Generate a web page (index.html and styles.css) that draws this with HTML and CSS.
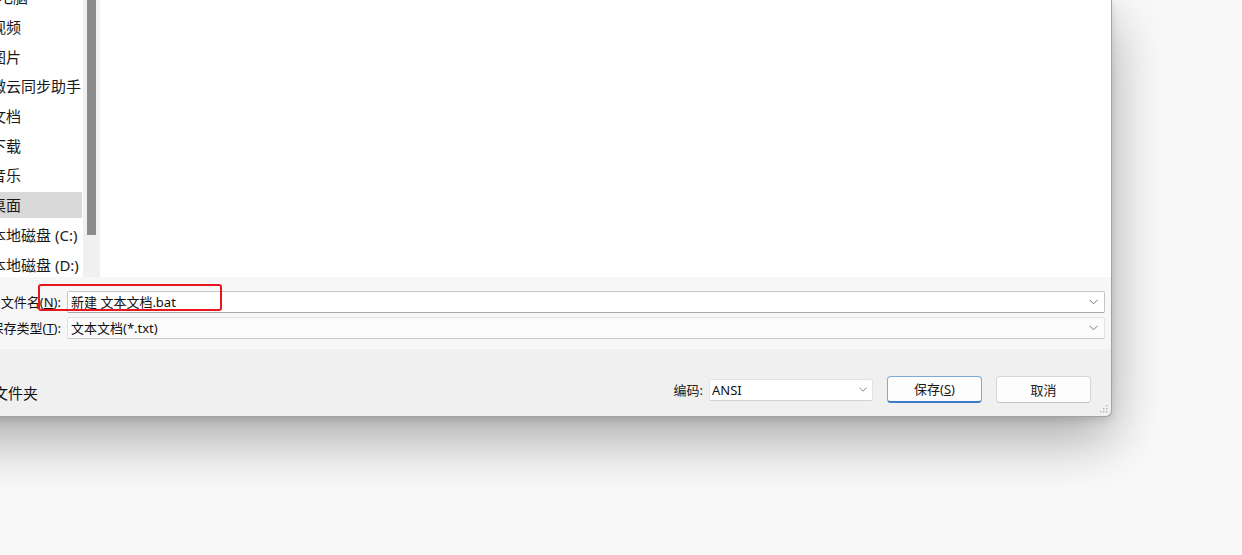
FILE: index.html
```html
<!DOCTYPE html>
<html lang="zh-CN">
<head>
<meta charset="utf-8">
<title>另存为</title>
<link rel="stylesheet" href="styles.css">
</head>
<body>
<div class="desktop">
  <div class="window">
    <div class="panes">
      <div class="nav">
        <ul class="nav-list">
          <li class="nav-item nav-root">此电脑</li>
          <li class="nav-item">视频</li>
          <li class="nav-item">图片</li>
          <li class="nav-item">微云同步助手</li>
          <li class="nav-item">文档</li>
          <li class="nav-item">下载</li>
          <li class="nav-item">音乐</li>
          <li class="nav-item selected">桌面</li>
          <li class="nav-item">本地磁盘 (C:)</li>
          <li class="nav-item">本地磁盘 (D:)</li>
        </ul>
      </div>
      <div class="scrollbar"><div class="thumb"></div></div>
      <div class="main"></div>
    </div>

    <div class="form">
      <div class="form-row">
        <label class="form-label">文件名(<u>N</u>):</label>
        <div class="field field-input">
          <span class="field-text">新建 文本文档.bat</span>
          <svg class="chev" width="9" height="6" viewBox="0 0 9 6"><polyline points="0.5,0.8 4.5,4.8 8.5,0.8" fill="none" stroke="#7a7a7a" stroke-width="1"/></svg>
        </div>
        <div class="highlight"></div>
      </div>
      <div class="form-row">
        <label class="form-label">保存类型(<u>T</u>):</label>
        <div class="field field-combo">
          <span class="field-text">文本文档(*.txt)</span>
          <svg class="chev" width="9" height="6" viewBox="0 0 9 6"><polyline points="0.5,0.8 4.5,4.8 8.5,0.8" fill="none" stroke="#7a7a7a" stroke-width="1"/></svg>
        </div>
      </div>
    </div>

    <div class="footer">
      <div class="hide-folders">隐藏文件夹</div>
      <div class="actions">
        <span class="enc-label">编码:</span>
        <div class="select">
          <span class="field-text">ANSI</span>
          <svg class="chev" width="8" height="5" viewBox="0 0 8 5"><polyline points="0.5,0.7 4,4.2 7.5,0.7" fill="none" stroke="#8a8a8a" stroke-width="1"/></svg>
        </div>
        <button class="btn btn-primary">保存(<u>S</u>)</button>
        <button class="btn">取消</button>
      </div>
      <svg class="grip" width="9" height="9" viewBox="0 0 9 9">
        <rect x="7" y="1" width="1.4" height="1.4" fill="#b0b0b0"/>
        <rect x="4" y="4" width="1.4" height="1.4" fill="#b0b0b0"/>
        <rect x="7" y="4" width="1.4" height="1.4" fill="#b0b0b0"/>
        <rect x="1" y="7" width="1.4" height="1.4" fill="#b0b0b0"/>
        <rect x="4" y="7" width="1.4" height="1.4" fill="#b0b0b0"/>
        <rect x="7" y="7" width="1.4" height="1.4" fill="#b0b0b0"/>
      </svg>
    </div>
  </div>
</div>
</body>
</html>
```
FILE: styles.css
```css
* { box-sizing: border-box; }

html, body {
  margin: 0;
  padding: 0;
}

body {
  background: #f9f9f9;
  font-family: "Noto Sans", "Noto Sans CJK SC", sans-serif;
  color: #1a1a1a;
  overflow: hidden;
}

.desktop {
  position: relative;
  width: 1242px;
  height: 555px;
  overflow: hidden;
}

.window {
  position: absolute;
  left: -60px;
  top: 0;
  width: 1172px;
  height: 417px;
  background: #f0f0f0;
  border-right: 1px solid #a3a3a3;
  border-bottom: 1px solid #a3a3a3;
  border-bottom-right-radius: 6px;
  box-shadow: 0 22px 55px rgba(0, 0, 0, 0.33), 0 3px 8px rgba(0, 0, 0, 0.12);
  display: flex;
  flex-direction: column;
  overflow: hidden;
}

/* ---------- panes ---------- */
.panes {
  height: 277px;
  display: flex;
  flex-shrink: 0;
}

.nav {
  width: 143px;
  background: #fff;
  overflow: hidden;
}

.nav-list {
  list-style: none;
  margin: -15.7px 0 0 0;
  padding: 0;
  display: flex;
  flex-direction: column;
  gap: 3.7px;
}

.nav-item {
  height: 26px;
  line-height: 26px;
  margin-left: 10px;
  margin-right: 1px;
  padding-left: 41px;
  font-size: 15px;
  white-space: nowrap;
  overflow: hidden;
  color: #1a1a1a;
}

.nav-item.nav-root {
  padding-left: 33px;
}

.nav-item.selected {
  background: #d9d9d9;
}

.scrollbar {
  width: 17px;
  background: #f0f0f0;
  padding-left: 4px;
}

.thumb {
  width: 9px;
  height: 235px;
  background: #8c8c8c;
}

.main {
  flex: 1;
  background: #fff;
}

/* ---------- form ---------- */
.form {
  height: 72px;
  background: #f7f7f7;
  padding: 14px 6px 0 0;
  display: flex;
  flex-direction: column;
  gap: 4px;
  flex-shrink: 0;
}

.form-row {
  position: relative;
  display: flex;
  align-items: center;
  height: 22px;
}

.form-label {
  width: 123px;
  text-align: right;
  padding-right: 2px;
  font-size: 13px;
  line-height: 22px;
  color: #111;
  white-space: nowrap;
}

.field {
  flex: 1;
  margin-left: 4px;
  height: 22px;
  display: flex;
  align-items: center;
  justify-content: space-between;
  padding: 0 6px 0 3px;
  border-radius: 2px;
}

.field-input {
  background: #fff;
  border: 1px solid #c6c6c6;
  border-bottom-color: #a8a8a8;
}

.field-combo {
  background: #fbfbfb;
  border: 1px solid #e2e2e2;
  border-bottom-color: #cacaca;
}

.field-text {
  font-size: 13px;
  line-height: 20px;
  color: #111;
  white-space: nowrap;
}

.chev {
  display: block;
  flex-shrink: 0;
}

.highlight {
  position: absolute;
  left: 98px;
  top: -7px;
  width: 184px;
  height: 27px;
  border: 2px solid #e8161d;
  border-radius: 3px;
  pointer-events: none;
}

/* ---------- footer ---------- */
.footer {
  position: relative;
  flex: 1;
  display: flex;
  align-items: flex-start;
  justify-content: space-between;
  padding: 27px 20px 0 23px;
}

.hide-folders {
  font-size: 15px;
  line-height: 20px;
  margin-top: 7px;
  color: #111;
}

.actions {
  display: flex;
  align-items: center;
  height: 27px;
}

.enc-label {
  font-size: 13px;
  color: #222;
  margin-right: 6px;
}

.select {
  width: 164px;
  height: 22px;
  background: #fff;
  border: 1px solid #e3e3e3;
  border-bottom-color: #d0d0d0;
  border-radius: 2px;
  display: flex;
  align-items: center;
  justify-content: space-between;
  padding: 0 5px 0 2px;
  margin-right: 14px;
}

.btn {
  width: 95px;
  height: 27px;
  background: #fdfdfd;
  border: 1px solid #d6d6d6;
  border-bottom-color: #c2c2c2;
  border-radius: 4px;
  font-family: inherit;
  font-size: 13px;
  line-height: 20px;
  color: #1a1a1a;
  padding: 0;
}

.btn-primary {
  border: 1px solid #7fa9d6;
  border-bottom: 2px solid #3b7cc4;
  margin-right: 14px;
}

.grip {
  position: absolute;
  right: 3px;
  bottom: 3px;
}
```
